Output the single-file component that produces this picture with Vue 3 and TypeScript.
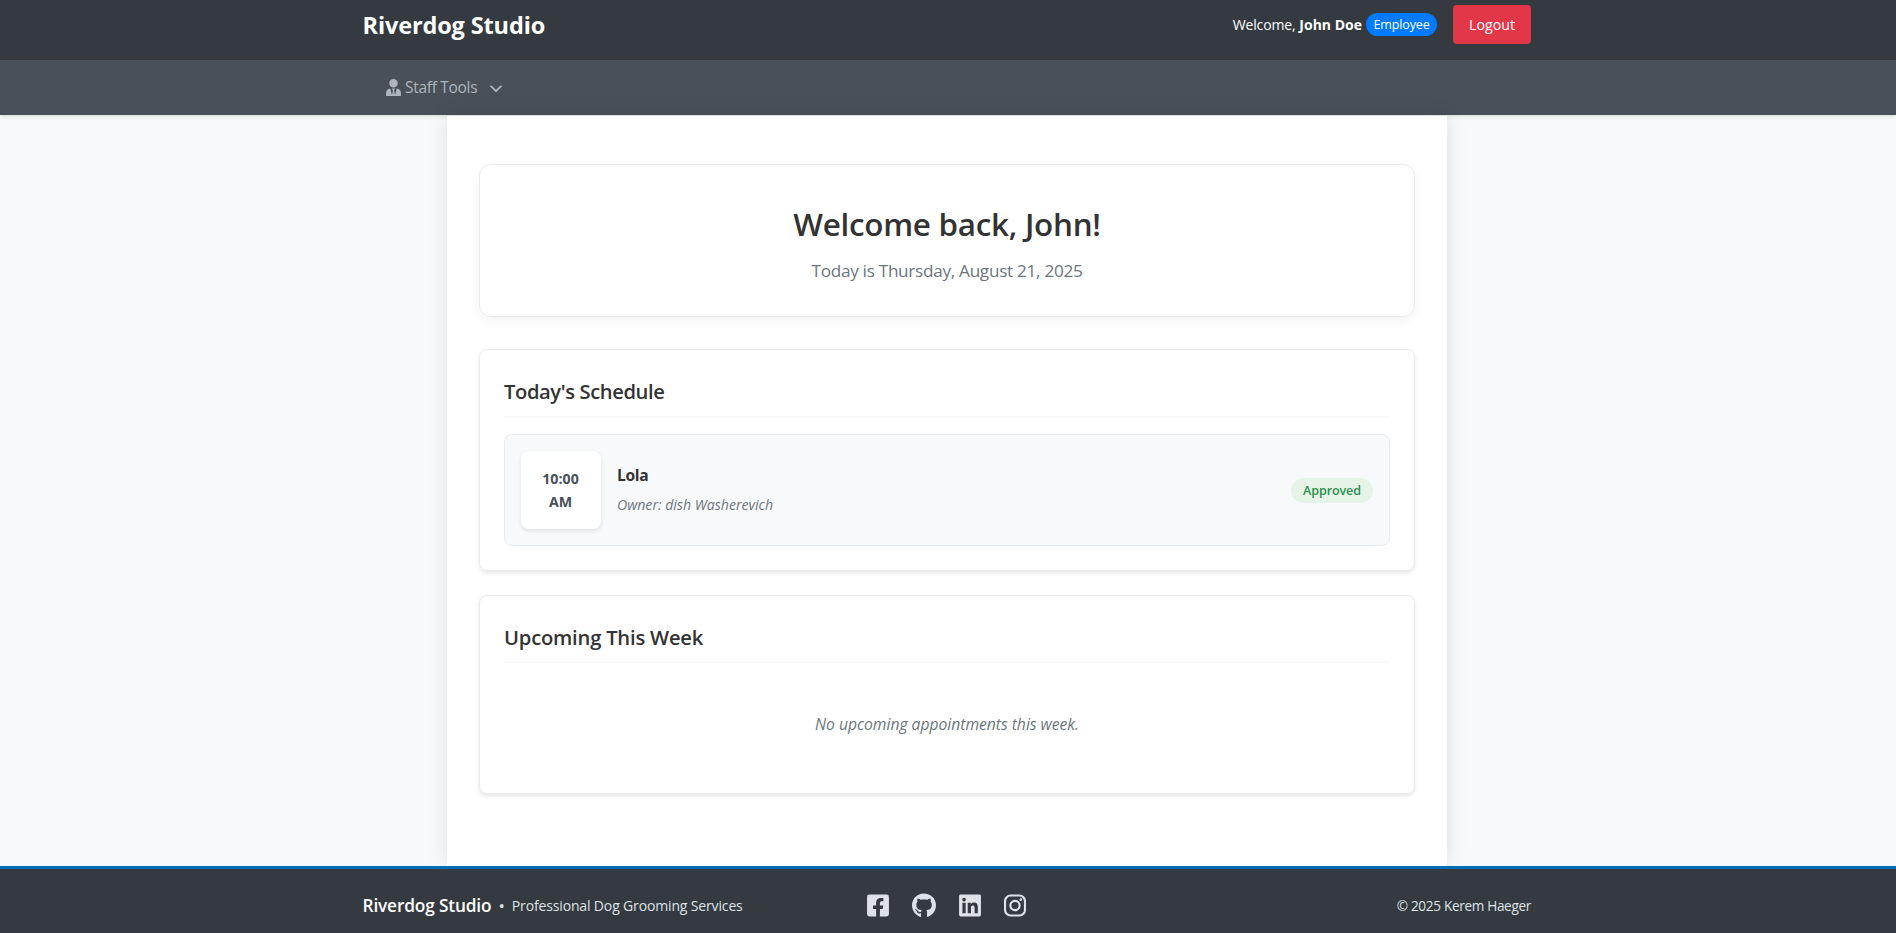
<script setup lang="ts">
interface Appointment {
  time: string
  meridiem: string
  dog: string
  owner: string
  status: string
}

interface SocialLink {
  name: string
  viewBox: string
  path: string
}

const user = { firstName: 'John', fullName: 'John Doe', role: 'Employee' }
const today = 'Thursday, August 21, 2025'

const schedule: Appointment[] = [
  { time: '10:00', meridiem: 'AM', dog: 'Lola', owner: 'dish Washerevich', status: 'Approved' },
]

const socials: SocialLink[] = [
  {
    name: 'facebook',
    viewBox: '0 0 448 512',
    path: 'M400 32H48A48 48 0 0 0 0 80v352a48 48 0 0 0 48 48h137.25V327.69h-63V256h63v-54.64c0-62.15 37-96.48 93.67-96.48 27.14 0 55.52 4.84 55.52 4.84v61h-31.27c-30.81 0-40.42 19.12-40.42 38.73V256h68.78l-11 71.69h-57.78V480H400a48 48 0 0 0 48-48V80a48 48 0 0 0-48-48z',
  },
  {
    name: 'github',
    viewBox: '0 0 496 512',
    path: 'M165.9 397.4c0 2-2.3 3.6-5.2 3.6-3.3.3-5.6-1.3-5.6-3.6 0-2 2.3-3.6 5.2-3.6 3-.3 5.6 1.3 5.6 3.6zm-31.1-4.5c-.7 2 1.3 4.3 4.3 4.9 2.6 1 5.6 0 6.2-2s-1.3-4.3-4.3-5.2c-2.6-.7-5.5.3-6.2 2.3zM244.8 8C106.1 8 0 113.3 0 252c0 110.9 69.8 205.8 169.5 239.2 12.8 2.3 17.3-5.6 17.3-12.1 0-6.2-.3-40.4-.3-61.4 0 0-70 15-84.7-29.8 0 0-11.4-29.1-27.8-36.6 0 0-22.9-15.7 1.6-15.4 0 0 24.9 2 38.6 25.8 21.9 38.6 58.6 27.5 72.9 20.9 2.3-16 8.8-27.1 16-33.7-55.9-6.2-112.3-14.3-112.3-110.5 0-27.5 7.6-41.3 23.6-58.9-2.6-6.5-11.1-33.3 2.6-67.9 20.9-6.5 69 27 69 27 20-5.6 41.5-8.5 62.8-8.5s42.8 2.9 62.8 8.5c0 0 48.1-33.6 69-27 13.7 34.7 5.2 61.4 2.6 67.9 16 17.7 25.8 31.5 25.8 58.9 0 96.5-58.9 104.2-114.8 110.5 9.2 7.9 17 22.9 17 46.4 0 33.7-.3 75.4-.3 83.6 0 6.5 4.6 14.4 17.3 12.1C428.2 457.8 496 362.9 496 252 496 113.3 383.5 8 244.8 8z',
  },
  {
    name: 'linkedin',
    viewBox: '0 0 448 512',
    path: 'M416 32H31.9C14.3 32 0 46.5 0 64.3v383.4C0 465.5 14.3 480 31.9 480H416c17.6 0 32-14.5 32-32.3V64.3c0-17.8-14.4-32.3-32-32.3zM135.4 416H69V202.2h66.5V416zm-33.2-243c-21.3 0-38.5-17.3-38.5-38.5S80.9 96 102.2 96c21.2 0 38.5 17.3 38.5 38.5 0 21.3-17.2 38.5-38.5 38.5zm282.1 243h-66.4V312c0-24.8-.5-56.7-34.5-56.7-34.6 0-39.9 27-39.9 54.9V416h-66.4V202.2h63.7v29.2h.9c8.9-16.8 30.6-34.5 62.9-34.5 67.2 0 79.7 44.3 79.7 101.9V416z',
  },
]
</script>

<template>
  <div class="page">
    <header class="topbar">
      <div class="wrap topbar-row">
        <div class="brand">Riverdog Studio</div>
        <div class="account">
          <span class="greeting">Welcome,</span>
          <strong class="user-name">{{ user.fullName }}</strong>
          <span class="role">{{ user.role }}</span>
          <button class="logout" type="button">Logout</button>
        </div>
      </div>
    </header>

    <nav class="subnav">
      <div class="wrap">
        <a class="nav-link">
          <svg class="nav-icon" viewBox="0 0 448 512" fill="currentColor">
            <path d="M224 256c70.7 0 128-57.3 128-128S294.7 0 224 0 96 57.3 96 128s57.3 128 128 128zm95.8 32.6L272 480l-32-136 32-56h-96l32 56-32 136-47.8-191.4C56.9 292 0 350.3 0 422.4V512h448v-89.600c0-72.1-56.9-130.4-128.2-133.8z" />
          </svg>
          <span class="nav-label">Staff Tools</span>
          <svg class="chevron" viewBox="0 0 12 8" fill="none" stroke="currentColor" stroke-width="1.9" stroke-linecap="round" stroke-linejoin="round">
            <path d="M1.2 1.4 6 6.2l4.8-4.8" />
          </svg>
        </a>
      </div>
    </nav>

    <div class="content">
      <main class="panel">
        <section class="welcome">
          <h1>Welcome back, {{ user.firstName }}!</h1>
          <p>Today is {{ today }}</p>
        </section>

        <section class="card">
          <h2 class="schedule-title">Today's Schedule</h2>
          <article v-for="a in schedule" :key="a.time" class="appointment">
            <div class="time">
              <span>{{ a.time }}</span>
              <span>{{ a.meridiem }}</span>
            </div>
            <div class="details">
              <strong class="dog">{{ a.dog }}</strong>
              <em class="owner">Owner: {{ a.owner }}</em>
            </div>
            <span class="status">{{ a.status }}</span>
          </article>
        </section>

        <section class="card">
          <h2>Upcoming This Week</h2>
          <p class="empty">No upcoming appointments this week.</p>
        </section>
      </main>
    </div>

    <footer class="footer">
      <div class="wrap footer-row">
        <div class="footer-brand">
          <span class="footer-name">Riverdog Studio</span>
          <span class="bullet">•</span>
          <span class="tagline">Professional Dog Grooming Services</span>
        </div>
        <div class="socials">
          <svg v-for="s in socials" :key="s.name" class="social" :class="{ wide: s.name === 'github' }" :viewBox="s.viewBox" fill="currentColor">
            <path :d="s.path" />
          </svg>
          <svg class="social" viewBox="0 0 448 512" fill="none" stroke="currentColor">
            <rect x="20" y="52" width="408" height="408" rx="112" stroke-width="44" />
            <circle cx="224" cy="256" r="95" stroke-width="44" />
            <circle cx="343.5" cy="136.5" r="26.8" fill="currentColor" stroke="none" />
          </svg>
        </div>
        <div class="copyright">© 2025 Kerem Haeger</div>
      </div>
    </footer>
  </div>
</template>

<style>
body {
  margin: 0;
  background: #f8f9fa;
}
</style>

<style scoped>
.page {
  box-sizing: border-box;
  height: 933px;
  display: flex;
  flex-direction: column;
  overflow: hidden;
  background: #f8f9fb;
  color: #333;
  font-family: "Open Sans", "Noto Sans", sans-serif;
}
.wrap {
  width: 1169px;
  margin: 0 auto;
}
.topbar,
.subnav,
.footer {
  box-sizing: border-box;
  padding-right: 3px;
  flex: none;
}
.topbar {
  height: 60px;
  padding-top: 5px;
  background: #343a40;
  color: #fff;
}
.topbar-row {
  display: flex;
  align-items: center;
  justify-content: space-between;
  height: 39px;
}
.brand {
  padding: 1px 0 0 0.5px;
  font-size: 23.5px;
  font-weight: 700;
  letter-spacing: -0.13px;
  line-height: 38px;
}
.account {
  display: flex;
  align-items: center;
  font-size: 14px;
  line-height: 23px;
}
.greeting {
  letter-spacing: -0.17px;
}
.user-name {
  margin-left: 4px;
  font-weight: 700;
}
.role {
  box-sizing: border-box;
  width: 71px;
  height: 23px;
  margin-left: 4px;
  border-radius: 12px;
  background: #007bff;
  text-align: center;
  font-size: 12.5px;
  letter-spacing: -0.14px;
  line-height: 24px;
}
.logout {
  width: 78px;
  height: 39px;
  margin-left: 16px;
  padding: 0;
  border: 0;
  border-radius: 4px;
  background: #e23649;
  color: #fff;
  font: 14.2px/39px "Open Sans", "Noto Sans", sans-serif;
}
.subnav {
  height: 55px;
  background: #495057;
  color: #adb5bd;
  box-shadow: 0 2px 4px rgba(0, 0, 0, 0.1);
}
.nav-link {
  display: inline-flex;
  align-items: center;
  height: 54px;
  padding-left: 24px;
}
.nav-icon {
  width: 15px;
  height: 17px;
}
.nav-label {
  margin-left: 4px;
  font-size: 15.5px;
  letter-spacing: -0.3px;
}
.chevron {
  width: 12px;
  height: 8px;
  margin: 4px 0 0 12.5px;
}
.content {
  flex: 1;
  min-height: 0;
  margin-top: 1px;
  padding-right: 2px;
}
.panel {
  position: relative;
  box-sizing: border-box;
  width: 1000px;
  height: 100%;
  margin: 0 auto;
  padding: 48px 32px 0;
  background: #fff;
  box-shadow: 0 0 20px rgba(0, 0, 0, 0.1);
}
.welcome {
  box-sizing: border-box;
  height: 153px;
  padding-top: 40px;
  border: 1px solid #e9ecef;
  border-radius: 12px;
  box-shadow: 0 4px 12px rgba(0, 0, 0, 0.05);
  text-align: center;
}
h1,
h2,
p {
  margin: 0;
}
h1 {
  font-size: 31.4px;
  font-weight: 600;
  letter-spacing: -0.27px;
  line-height: 37px;
}
.welcome p {
  margin-top: 14px;
  color: #6c757d;
  font-size: 17.2px;
  letter-spacing: -0.3px;
  line-height: 29px;
}
.card {
  margin-top: 24px;
  padding: 24px;
  border: 1px solid #e9ecef;
  border-radius: 8px;
  box-shadow: 0 2px 4px rgba(0, 0, 0, 0.1);
}
.welcome + .card {
  margin-top: 32px;
}
h2 {
  margin-bottom: 16px;
  padding-bottom: 6.6px;
  border-bottom: 2px solid #f8f9fa;
  font-size: 20.2px;
  font-weight: 600;
  letter-spacing: -0.21px;
  line-height: 35px;
}
.schedule-title {
  letter-spacing: -0.41px;
}
.appointment {
  display: flex;
  align-items: center;
  gap: 16px;
  padding: 16px;
  border: 1px solid #e9ecef;
  border-radius: 8px;
  background: #f8f9fb;
}
.time {
  box-sizing: border-box;
  display: flex;
  flex-direction: column;
  justify-content: center;
  width: 80px;
  height: 78px;
  padding: 1px 1px 0 0;
  border-radius: 8px;
  background: #fff;
  box-shadow: 0 2px 4px rgba(0, 0, 0, 0.1);
  color: #495057;
  text-align: center;
  font-size: 14.2px;
  font-weight: 700;
  line-height: 23px;
}
.details {
  display: flex;
  flex: 1;
  flex-direction: column;
  gap: 4px;
  padding-top: 1px;
  line-height: 25px;
}
.dog {
  font-size: 15.6px;
  letter-spacing: -0.3px;
}
.owner {
  color: #6c757d;
  font-size: 14.1px;
}
.status {
  width: 82px;
  height: 25px;
  margin-top: 1px;
  border-radius: 13px;
  background: #e6f4e8;
  color: #2f8f4e;
  text-align: center;
  font-size: 12.6px;
  font-weight: 600;
  letter-spacing: -0.14px;
  line-height: 26px;
}
.empty {
  height: 90px;
  margin-bottom: -24px;
  padding-bottom: 1px;
  padding-top: 0;
  padding-bottom: 24px;
  color: #6c757d;
  text-align: center;
  font-size: 15.7px;
  font-style: italic;
  letter-spacing: -0.03px;
  line-height: 91px;
}
.footer {
  position: relative;
  height: 67px;
  padding-top: 24px;
  border-top: 3px solid #006fba;
  background: #343a40;
  color: #dee2e6;
}
.footer-row {
  display: grid;
  grid-template-columns: 1fr auto 1fr;
  align-items: center;
  height: 24px;
  font-size: 14px;
  line-height: 24px;
}
.footer-brand {
  display: flex;
  align-items: center;
}
.footer-name {
  padding-left: 0.5px;
  color: #fff;
  font-size: 17.3px;
  font-weight: 600;
  letter-spacing: -0.16px;
}
.bullet {
  margin: 0 7px;
  font-size: 17px;
}
.tagline {
  letter-spacing: -0.15px;
}
.socials {
  display: flex;
  align-items: center;
  gap: 23px;
}
.social {
  width: 22px;
  height: 25px;
}
.social.wide {
  width: 24px;
}
.copyright {
  text-align: right;
  font-size: 13.6px;
  letter-spacing: -0.33px;
}
</style>
